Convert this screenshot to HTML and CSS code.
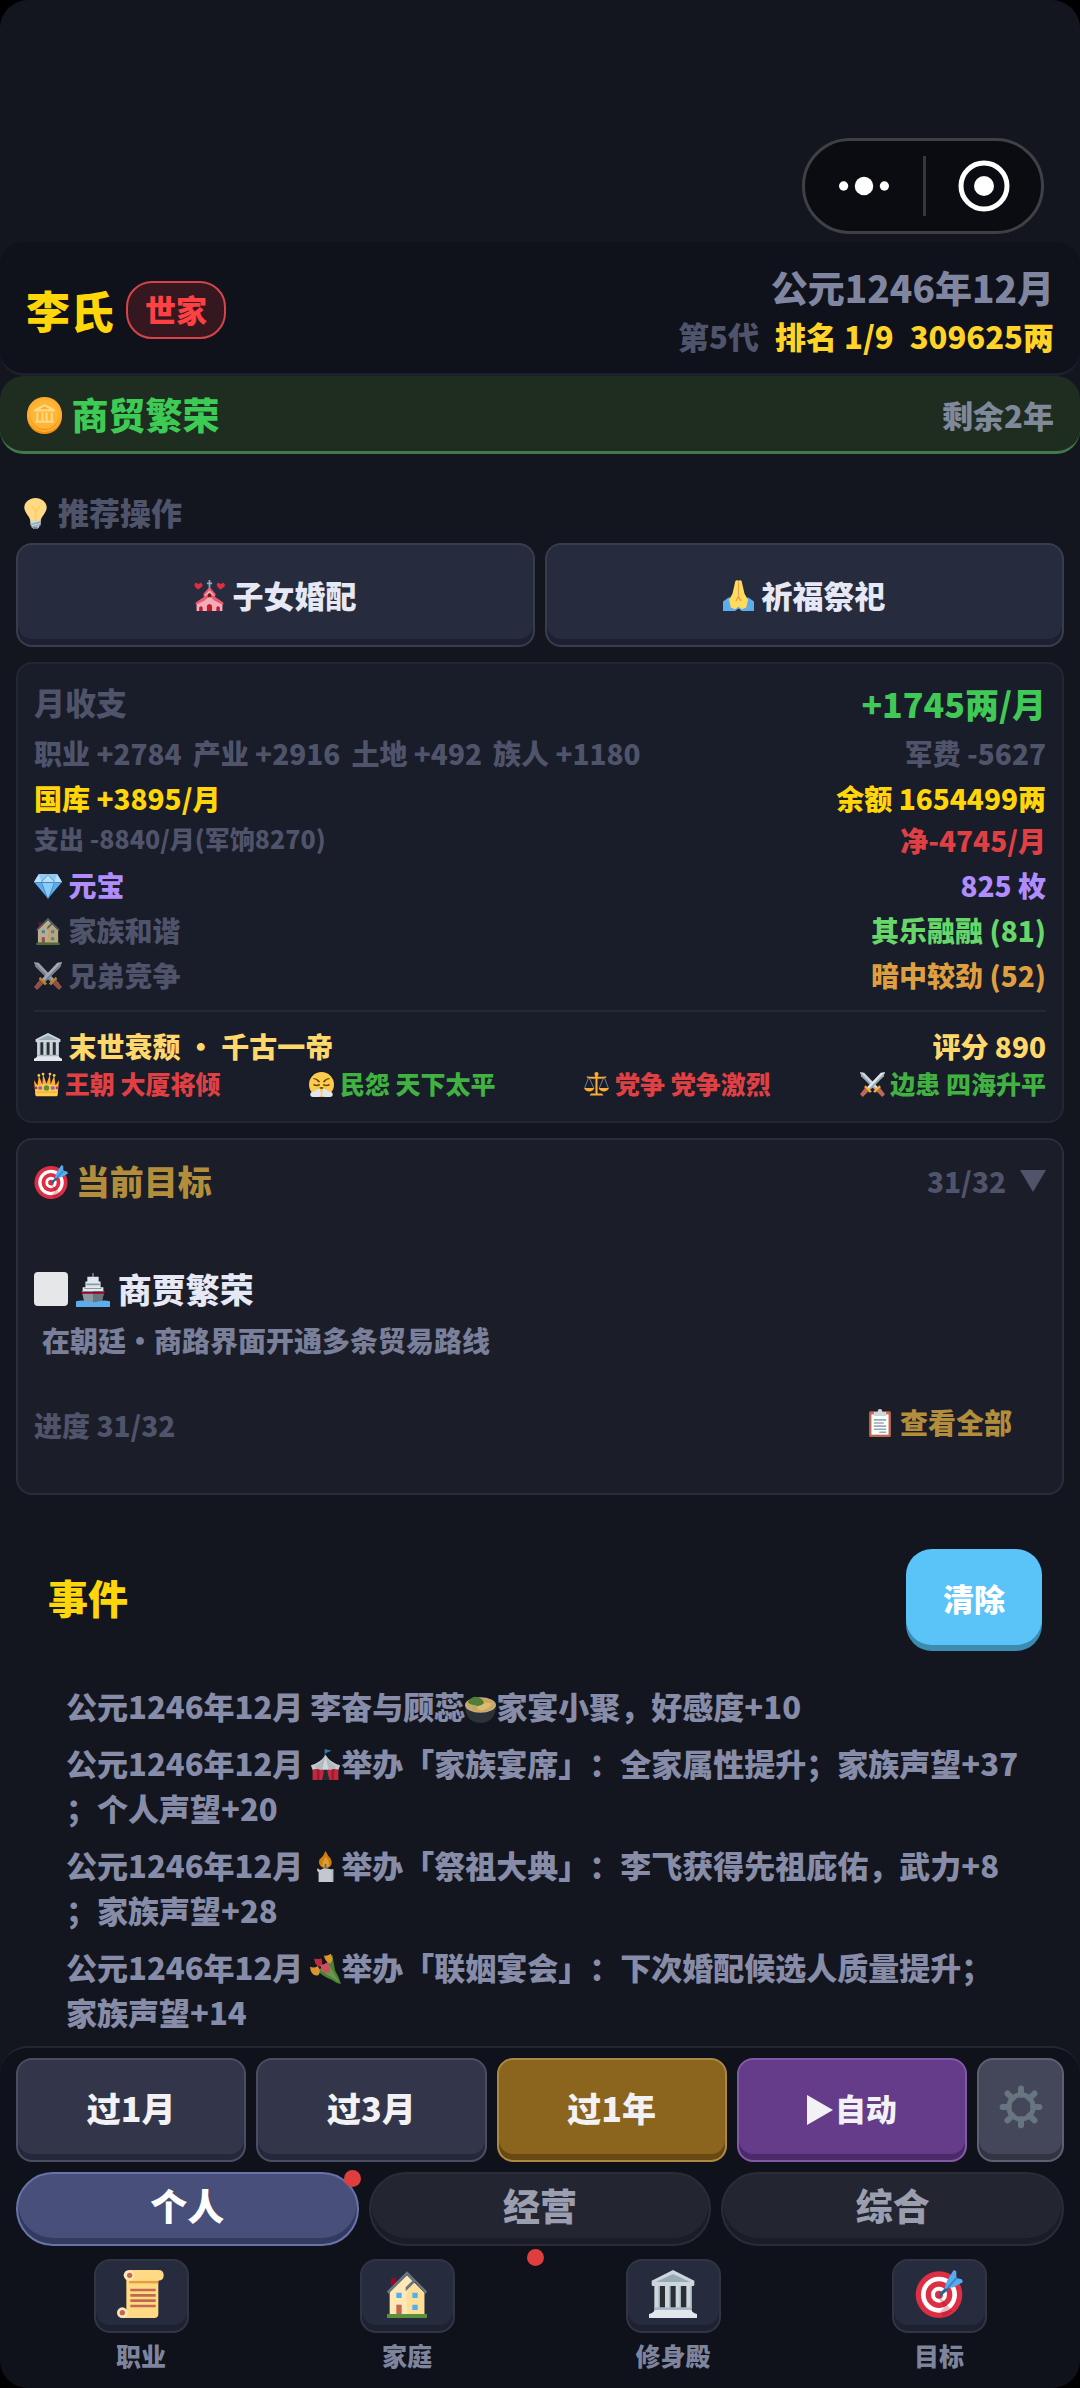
FILE: index.html
```html
<!DOCTYPE html>
<html lang="zh-CN">

<head>
    <meta charset="UTF-8">
    <meta name="viewport" content="width=device-width, initial-scale=1.0">
    <title>李氏</title>
    <link rel="stylesheet" href="styles.css">
</head>

<body>
    <!-- 图标 -->
    <svg class="sprite" aria-hidden="true">
        <symbol id="i-coin" viewBox="0 0 36 36">
            <circle cx="18" cy="19" r="17" fill="#f4900c" />
            <circle cx="18" cy="17" r="17" fill="#ffac33" />
            <circle cx="18" cy="18" r="14" fill="#f4900c" />
            <circle cx="18" cy="17" r="14" fill="#ffb636" />
            <g fill="#ffd983">
                <path d="M8 14v-2l10-5 10 5v2z" />
                <path d="M10 15h2v8h-2zM15 15h2v8h-2zM19 15h2v8h-2zM24 15h2v8h-2zM9 23h18v2H9z" />
            </g>
            <path d="M13 12l5-3 5 3z" fill="#ffac33" />
        </symbol>
        <symbol id="i-bulb" viewBox="0 0 36 36">
            <path d="M31 11.060C31 4.950 25 0 18 0S5 4.950 5 11.060c0 6 7 10.940 7 15.940h12c0-5 7-9.940 7-15.940z" fill="#ffd983" />
            <path d="M13 10c1 3 4 2 4.500 6V27h1.500V16c.5-4 3.500-3 4.500-6l-1-.8c-1 2.800-3 2.300-4.200 4.300-1.200-2-3.200-1.500-4.200-4.300z" fill="#ffcc4d" />
            <path d="M12 26h12v4l-2 4-2 2h-4l-2-2-2-4z" fill="#ccd6dd" />
            <path d="M12 30l12-3v2l-12 3zM13 33l11-3v2l-10 3z" fill="#99aab5" />
            <path d="M15 34h6l-1.500 2h-3z" fill="#66757f" />
        </symbol>
        <symbol id="i-chapel" viewBox="0 0 36 36">
            <path d="M17 0h2v3h2v2h-2v6h-2V5h-2V3h2z" fill="#99aab5" />
            <path d="M12 16l6-7 6 7v5l9 6v9H3v-9l9-6z" fill="#f4abba" />
            <path d="M18 8l-7 8v3l7-7 7 7v-3zM11 20L2 26v3l10-5 6-5 6 5 10 5v-3l-9-6-7-5z" fill="#ea596e" />
            <path d="M6 36v-4q2-3 4 0v4zM26 36v-4q2-3 4 0v4zM15 36v-6q3-4 6 0v6z" fill="#be1931" />
            <path d="M16 20v-3q2-3 4 0v3z" fill="#662113" />
            <path d="M5 11C0 8 0 5 1 4q2-2 4 1 3-3 4-1c2 2 1 4-4 7zM31 11c-5-3-5-6-4-7q2-2 4 1 3-3 4-1c2 2 1 4-4 7z" fill="#dd2e44" />
        </symbol>
        <symbol id="i-pray" viewBox="0 0 36 36">
            <path d="M0 25l7-5 5 4 6 5 6-5 5-4 7 5v11H22l-4-3-4 3H0z" fill="#5dadec" />
            <path d="M18 1c-1-1-4-1-4 2l-3 13-4 7 2 9 5 2 4-3 4 3 5-2 2-9-4-7-3-13c0-3-3-3-4-2z" fill="#ffdc5d" />
            <path d="M17.500 2h1v17l3 5-1 1-2.500-4-2.500 4-1-1 3-5z" fill="#ef9645" />
        </symbol>
        <symbol id="i-gem" viewBox="0 0 36 36">
            <path d="M6 3h24l6 10-18 21L0 13z" fill="#5dadec" />
            <path d="M6 3h24l6 10H0z" fill="#bdddf4" />
            <path d="M6 3l4 10L18 3l8 10 4-10zM10 13l8 21 8-21z" fill="#8ccaf7" />
            <path d="M0 13h36l-1 1H1zM10 13l8 21h-1L9 13zM26 13l-8 21h1l8-21zM18 3l-9 10h1l8-9 8 9h1z" fill="#4289c1" />
        </symbol>
        <symbol id="i-house" viewBox="0 0 36 36">
            <path d="M6 6h4v9H6z" fill="#a0041e" />
            <path d="M5 16L18 4l13 13v16H5z" fill="#ffe8b6" />
            <path d="M18 15l6-5 7 7v16H18z" fill="#ffd983" opacity=".6" />
            <path d="M18 1L3 16l1 2L18 4l4 4-5 5v3l7-7 8 9 1-2z" fill="#66757f" />
            <path d="M10 17h4v4h-4zM22 17h4v4h-4zM22 26h4v4h-4z" fill="#55acee" />
            <path d="M10 26h4v8h-4z" fill="#c1694f" />
            <path d="M3 33h30v3H3z" fill="#5c913b" />
        </symbol>
        <symbol id="i-swords" viewBox="0 0 36 36">
            <path d="M0 0l6 1 21 22-4 4L2 6z" fill="#ccd6dd" />
            <path d="M1 1l24 25-2 1L2 6z" fill="#99aab5" />
            <path d="M27 25l2-2 7 9-4 4-8-8z" fill="#bf6952" />
            <path d="M19 28l9-9 2 3-8 8z" fill="#ffac33" />
            <path d="M36 0l-6 1L9 23l4 4L34 6z" fill="#e1e8ed" />
            <path d="M35 1L11 26l2 1L34 6z" fill="#99aab5" />
            <path d="M9 25l-2-2-7 9 4 4 8-8z" fill="#bf6952" />
            <path d="M17 28l-9-9-2 3 8 8z" fill="#ffac33" />
        </symbol>
        <symbol id="i-temple" viewBox="0 0 36 36">
            <path d="M4 11h28v18H4z" fill="#292f33" />
            <path d="M4 11h4v18H4zM12 11h4v18h-4zM20 11h4v18h-4zM28 11h4v18h-4z" fill="#ccd6dd" />
            <path d="M7 11h1v18H7zM15 11h1v18h-1zM23 11h1v18h-1zM31 11h1v18h-1z" fill="#aab8c2" />
            <path d="M18 0l16 8v3q0 1-1 1H3q-1 0-1-1V8z" fill="#ccd6dd" />
            <path d="M18 3l13 6H5z" fill="#99aab5" />
            <path d="M4 28h28v3H4z" fill="#aab8c2" />
            <path d="M4 30h28q0 2 4 3v3H0v-3q4-1 4-3z" fill="#e1e8ed" />
        </symbol>
        <symbol id="i-crown" viewBox="0 0 36 36">
            <path d="M2 32L0 12l5 7L7 5l5 13L13 3l5 14L23 3l1 15 5-13 2 14 5-7-2 20z" fill="#ffac33" />
            <path d="M2 20q16-5 32 0v13q0 2-2 2H4q-2 0-2-2z" fill="#ffcc4d" />
            <path d="M3 28h30v2H3z" fill="#ffac33" />
            <circle cx="18" cy="23" r="4" fill="#5c913b" />
            <circle cx="9" cy="23" r="3" fill="#9266cc" />
            <circle cx="27" cy="23" r="3" fill="#9266cc" />
            <circle cx="3" cy="23" r="2" fill="#dd2e44" />
            <circle cx="33" cy="23" r="2" fill="#dd2e44" />
            <g fill="#ffcc4d">
                <circle cx="7" cy="5" r="2" />
                <circle cx="13" cy="3" r="2" />
                <circle cx="23" cy="3" r="2" />
                <circle cx="29" cy="5" r="2" />
            </g>
        </symbol>
        <symbol id="i-huff" viewBox="0 0 36 36">
            <circle cx="18" cy="18" r="18" fill="#ffcc4d" />
            <path d="M6 9q6-1 10 5l-2 1q-4-5-8-5zM30 9q-6-1-10 5l2 1q4-5 8-5zM7 17q4 3 8 0l1 2q-5 3-10 0zM29 17q-4 3-8 0l-1 2q5 3 10 0z" fill="#664500" />
            <path d="M12 24q6-5 12 0z" fill="#664500" />
            <path d="M15 22l2 8q1 6-4 6H6q-5 0-4-5 1-3 5-3 4-1 8-6zM21 22l-2 8q-1 6 4 6h7q5 0 4-5-1-3-5-3-4-1-8-6z" fill="#e1e8ed" />
        </symbol>
        <symbol id="i-scales" viewBox="0 0 36 36">
            <path d="M16.500 3h3v28h-3zM10 31h16l2 3H8z" fill="#ffac33" />
            <circle cx="18" cy="3" r="3" fill="#ffac33" />
            <path d="M4 6q7 2 14 0 7 2 14 0v2q-7 3-14 1-7 2-14-1z" fill="#ffac33" />
            <path d="M7 7L1 23M7 7l7 16M29 7l-7 16M29 7l6 16" stroke="#99aab5" stroke-width="1" />
            <path d="M0 23h15q-2 5-7.500 5T0 23zM21 23h15q-2 5-7.500 5T21 23z" fill="#ffac33" />
        </symbol>
        <symbol id="i-target" viewBox="0 0 36 36">
            <circle cx="18" cy="18.500" r="17.500" fill="#dd2e44" />
            <circle cx="18" cy="18.500" r="13.500" fill="#fff" />
            <circle cx="18" cy="18.500" r="10" fill="#dd2e44" />
            <circle cx="18" cy="18.500" r="6" fill="#fff" />
            <circle cx="18" cy="18.500" r="3" fill="#dd2e44" />
            <path d="M18 19l10 12q-3 3-7 4l-2-4 3-3-5-8z" fill="#a0041e" opacity=".25" />
            <path d="M18 18l10-10 2 2-11 10z" fill="#226699" />
            <path d="M24 8l5-8 2 1v5l4 1 1 2-7 4-7 1z" fill="#55acee" />
            <path d="M24 13l7-8 1 1-7 8z" fill="#3a87c2" />
        </symbol>
        <symbol id="i-ship" viewBox="0 0 36 36">
            <path d="M17 0h2v6h-2z" fill="#66757f" />
            <path d="M12 4h12v5h2v6h3v5H7v-5h3V9h2z" fill="#e1e8ed" />
            <path d="M11 11h14v2H11zM9 16h18v1H9z" fill="#8899a6" />
            <path d="M6 19h24l-3 13H9z" fill="#8899a6" />
            <path d="M18 19h12l-3 13h-9z" fill="#66757f" />
            <path d="M6 20h24v2H6z" fill="#a0041e" />
            <path d="M0 30q6-2 12 0t12 0 12 0v6H0z" fill="#5dadec" />
        </symbol>
        <symbol id="i-clipboard" viewBox="0 0 36 36">
            <rect x="4" y="3" width="28" height="33" rx="2" fill="#c1694f" />
            <path d="M7 7h22v26H7z" fill="#fff" />
            <path d="M10 7V4h5q0-4 3-4t3 4h5v5H10z" fill="#ccd6dd" />
            <path d="M10 13h16v2H10zM10 17h13v2H10zM10 21h16v2H10zM10 25h16v2H10zM17 29h9v2h-9z" fill="#99aab5" />
        </symbol>
        <symbol id="i-bowl" viewBox="0 0 36 36">
            <path d="M0 15h36q0 14-9 19-9 4-18 0Q0 29 0 15z" fill="#31373d" />
            <ellipse cx="18" cy="15" rx="18" ry="9" fill="#d8c9a0" />
            <ellipse cx="18" cy="15" rx="16" ry="8" fill="#f2c069" />
            <path d="M14 18q5-7 17-5-2 6-10 8-5 1-7-3z" fill="#ffd983" />
            <path d="M3 12q5-8 12-6 6 2 7 7-5 5-11 2-4 1-8-3z" fill="#5c913b" />
            <path d="M7 17q3-2 6 1-3 3-6-1z" fill="#a6d388" />
        </symbol>
        <symbol id="i-tent" viewBox="0 0 36 36">
            <path d="M17 0l8 2-7 3v4h-1z" fill="#3b88c3" />
            <path d="M3 21h30v15H3z" fill="#dd2e44" />
            <path d="M8 22h3v14H8zM25 22h3v14h-3z" fill="#be1931" />
            <path d="M14 36q2-6 2-14h4q0 8 3 14z" fill="#292f33" />
            <path d="M18 7q6 9 17 12l-2 5-5-1-5 1-5-1-5 1-5-1-5 1-2-5Q12 16 18 7z" fill="#e1e8ed" />
            <path d="M18 7q-4 9-12 13l2 3 5 1q5-8 5-17 0 9 5 17l5-1 2-3Q22 16 18 7z" fill="#ccd6dd" />
            <path d="M18 7q-2 9-3 17h6q-1-8-3-17z" fill="#f5f8fa" />
        </symbol>
        <symbol id="i-candle" viewBox="0 0 36 36">
            <path d="M18 0q3 6 6 9 3 7-2 10-4 2-8 0-5-3-3-9 5-4 7-10z" fill="#f4900c" />
            <path d="M18 7q5 5 4 10-4 4-8 0 0-5 4-10z" fill="#ffb83f" />
            <path d="M17 15h2v7h-2z" fill="#66757f" />
            <path d="M9 20q3 3 5 1t9 0q2 1 4 0v15H10V25q-3-3-1-5z" fill="#e1e8ed" />
            <path d="M25 21h2v15h-2z" fill="#ccd6dd" />
        </symbol>
        <symbol id="i-flowers" viewBox="0 0 36 36">
            <path d="M8 20q12-5 18-18 2 12 3 18 5 8 7 16-6-1-11-5-9-3-17-11z" fill="#5c913b" />
            <path d="M12 20l22 14L21 12z" fill="#77b255" />
            <path d="M5 6q4 2 8 0 3 7-1 10-7-1-7-10z" fill="#dd2e44" />
            <path d="M16 3q4 1 8-2 4 6 0 11-5 1-8-9z" fill="#ffac33" />
            <path d="M0 16q5 2 9-1 5 7 0 11-8 1-9-10z" fill="#ffac33" />
            <path d="M12 13q5 1 7-2 7 6 3 12-9 1-10-10z" fill="#ea596e" />
        </symbol>
        <symbol id="i-scroll" viewBox="0 0 36 36">
            <path d="M7 3h24v30q0 3-3 3H4l3-5z" fill="#ffd983" />
            <path d="M9 8h22v2H9z" fill="#e39f3d" />
            <path d="M9 0h22q4 0 4 4t-4 4H9z" fill="#ffd983" />
            <circle cx="9" cy="4" r="4" fill="#ffe8b6" />
            <circle cx="9.500" cy="4" r="2" fill="#c1694f" />
            <circle cx="4" cy="32" r="4" fill="#ffe8b6" />
            <circle cx="4" cy="32" r="2" fill="#c1694f" />
            <path d="M10 14h19v2H10zM10 18h19v2H10zM10 22h19v2H10zM10 26h19v2H10z" fill="#c1694f" />
        </symbol>
        <symbol id="i-gear" viewBox="0 0 36 36">
            <g stroke="#66757f" stroke-width="5" stroke-linecap="round">
                <path d="M18 3v5M18 28v5M3 18h5M28 18h5M7 7l4 4M25 25l4 4M29 7l-4 4M11 25l-4 4" />
            </g>
            <circle cx="18" cy="18" r="10" fill="none" stroke="#66757f" stroke-width="4" />
        </symbol>
    </svg>

    <div class="app">
        <div class="topbar">
            <div class="capsule">
                <button type="button" aria-label="更多">
                    <svg width="50" height="50" viewBox="0 0 54 54" fill="#fff">
                        <circle cx="5" cy="27" r="5" />
                        <circle cx="27" cy="27" r="10" />
                        <circle cx="49" cy="27" r="5" />
                    </svg>
                </button>
                <button type="button" aria-label="关闭">
                    <svg width="54" height="54" viewBox="0 0 54 54">
                        <circle cx="27" cy="27" r="23" fill="none" stroke="#fff" stroke-width="5" />
                        <circle cx="27" cy="27" r="10" fill="#fff" />
                    </svg>
                </button>
            </div>
        </div>

        <header class="header">
            <div class="family">
                <h1>李氏</h1>
                <span class="badge">世家</span>
            </div>
            <div class="status">
                <div class="date">公元1246年12月</div>
                <div class="rank"><span>第5代</span><b>排名 1/9</b><b>309625两</b></div>
            </div>
        </header>

        <div class="era">
            <span class="era-name"><svg class="icon"><use href="#i-coin" /></svg> 商贸繁荣</span>
            <span class="era-left">剩余2年</span>
        </div>

        <main class="main">
            <h2 class="tip"><svg class="icon"><use href="#i-bulb" /></svg> 推荐操作</h2>
            <div class="actions">
                <button type="button" class="btn"><svg class="icon"><use href="#i-chapel" /></svg> 子女婚配</button>
                <button type="button" class="btn"><svg class="icon"><use href="#i-pray" /></svg> 祈福祭祀</button>
            </div>

            <section class="card">
                <div class="row income"><span>月收支</span><span class="total">+1745两/月</span></div>
                <div class="row">
                    <span class="parts"><span>职业 +2784</span><span>产业 +2916</span><span>土地 +492</span><span>族人 +1180</span></span>
                    <span>军费 -5627</span>
                </div>
                <div class="row gold"><span>国库 +3895/月</span><span>余额 1654499两</span></div>
                <div class="row expense"><span class="small">支出 -8840/月(军饷8270)</span><span class="red">净-4745/月</span></div>
                <div class="row purple"><span><svg class="icon"><use href="#i-gem" /></svg> 元宝</span><span>825 枚</span></div>
                <div class="row"><span><svg class="icon dim"><use href="#i-house" /></svg> 家族和谐</span><span class="lime">其乐融融 (81)</span></div>
                <div class="row"><span><svg class="icon dim"><use href="#i-swords" /></svg> 兄弟竞争</span><span class="orange">暗中较劲 (52)</span></div>
                <div class="dynasty">
                    <div class="row"><span><svg class="icon"><use href="#i-temple" /></svg> 末世衰颓 ・ 千古一帝</span><span>评分 890</span></div>
                    <div class="factors">
                        <span class="red"><svg class="icon"><use href="#i-crown" /></svg> 王朝 大厦将倾</span>
                        <span class="green"><svg class="icon"><use href="#i-huff" /></svg> 民怨 天下太平</span>
                        <span class="red"><svg class="icon"><use href="#i-scales" /></svg> 党争 党争激烈</span>
                        <span class="green"><svg class="icon"><use href="#i-swords" /></svg> 边患 四海升平</span>
                    </div>
                </div>
            </section>

            <section class="card goals">
                <div class="goals-head">
                    <h2><svg class="icon"><use href="#i-target" /></svg> 当前目标</h2>
                    <span class="count">31/32 <svg class="caret" viewBox="0 0 26 22"><path d="M0 0h26L13 22z" fill="currentColor" /></svg></span>
                </div>
                <div class="goal">
                    <input type="checkbox" id="goal">
                    <label for="goal"><svg class="icon"><use href="#i-ship" /></svg> 商贾繁荣</label>
                </div>
                <p class="goal-desc">在朝廷・商路界面开通多条贸易路线</p>
                <div class="goals-foot">
                    <span>进度 31/32</span>
                    <button type="button"><svg class="icon"><use href="#i-clipboard" /></svg> 查看全部</button>
                </div>
            </section>

            <section class="events">
                <div class="events-head">
                    <h2>事件</h2>
                    <button type="button">清除</button>
                </div>
                <ul>
                    <li>公元1246年12月 李奋与顾蕊<svg class="icon"><use href="#i-bowl" /></svg>家宴小聚，好感度+10</li>
                    <li>公元1246年12月 <svg class="icon"><use href="#i-tent" /></svg>举办「家族宴席」：全家属性提升；家族声望+37；个人声望+20</li>
                    <li>公元1246年12月 <svg class="icon"><use href="#i-candle" /></svg>举办「祭祖大典」：李飞获得先祖庇佑，武力+8；家族声望+28</li>
                    <li>公元1246年12月 <svg class="icon"><use href="#i-flowers" /></svg>举办「联姻宴会」：下次婚配候选人质量提升；家族声望+14</li>
                </ul>
            </section>
        </main>

        <footer class="footer">
            <div class="steps">
                <button type="button">过1月</button>
                <button type="button">过3月</button>
                <button type="button" class="year">过1年</button>
                <button type="button" class="auto"><svg class="play" viewBox="0 0 26 30"><path d="M0 0l26 15L0 30z" fill="currentColor" /></svg>自动</button>
                <button type="button" class="setting" aria-label="设置"><svg class="icon"><use href="#i-gear" /></svg></button>
            </div>
            <div class="tabs">
                <button type="button" class="on">个人<i class="dot"></i></button>
                <button type="button">经营</button>
                <button type="button">综合</button>
            </div>
            <nav class="nav">
                <a href="#"><span class="nav-icon"><svg class="icon"><use href="#i-scroll" /></svg></span>职业</a>
                <a href="#"><span class="nav-icon"><svg class="icon"><use href="#i-house" /></svg></span>家庭<i class="dot"></i></a>
                <a href="#"><span class="nav-icon"><svg class="icon"><use href="#i-temple" /></svg></span>修身殿</a>
                <a href="#"><span class="nav-icon"><svg class="icon"><use href="#i-target" /></svg></span>目标</a>
            </nav>
        </footer>
    </div>
</body>

</html>
```
FILE: styles.css
```css
* {
    margin: 0;
    padding: 0;
    box-sizing: border-box;
}

body {
    background: #000;
    color: #4f546b;
    font-family: "Noto Sans CJK SC", "Noto Sans", sans-serif;
    font-size: 28px;
    font-weight: 900;
    line-height: 41px;
}

button {
    border: none;
    background: none;
    color: inherit;
    font: inherit;
    cursor: pointer;
}

a {
    color: inherit;
    text-decoration: none;
}

h1,
h2,
b {
    font-weight: 900;
}

ul {
    list-style: none;
}

.sprite {
    position: absolute;
    width: 0;
    height: 0;
}

.icon {
    width: 1em;
    height: 1em;
    vertical-align: -0.12em;
}

.dim {
    opacity: .7;
}

.app {
    display: flex;
    flex-direction: column;
    min-height: 100vh;
    overflow: hidden;
    border-radius: 28px;
    background: #13161e;
}

/* 顶部胶囊 */
.topbar {
    display: flex;
    justify-content: flex-end;
    padding: 138px 36px 8px;
}

.capsule {
    display: flex;
    align-items: center;
    height: 96px;
    border: 3px solid #3e4045;
    border-radius: 48px;
    background: #0b0c11;
}

.capsule button {
    display: flex;
    align-items: center;
    justify-content: center;
    width: 118px;
    height: 60px;
}

.capsule button + button {
    border-left: 3px solid #35373b;
}

/* 家族信息 */
.header {
    display: flex;
    align-items: center;
    justify-content: space-between;
    height: 134px;
    padding: 4px 26px 0;
    border-bottom: 3px solid #1e212d;
    border-radius: 24px;
    background: #0f111b;
}

.family {
    display: flex;
    align-items: center;
    gap: 12px;
}

.family h1 {
    color: #ffd60a;
    font-size: 44px;
    line-height: 60px;
}

.badge {
    padding: 5px 17px 7px;
    border: 2px solid #d8434a;
    border-radius: 26px;
    background: #35181f;
    color: #ff4144;
    font-size: 31px;
    line-height: 42px;
}

.status {
    text-align: right;
}

.date {
    color: #8186a0;
    font-size: 37px;
    line-height: 52px;
}

.rank {
    display: flex;
    justify-content: flex-end;
    gap: 16px;
    font-size: 31px;
    line-height: 45px;
}

.rank b {
    color: #ffd426;
}

.era {
    display: flex;
    align-items: center;
    justify-content: space-between;
    height: 78px;
    padding: 2px 26px 0;
    border-bottom: 3px solid #407a49;
    border-radius: 24px;
    background: #1f2d20;
}

.era-name {
    color: #3ecb55;
    font-size: 37px;
}

.era-left {
    color: #7f8999;
    font-size: 31px;
}

.main {
    flex: 1;
    padding: 35px 16px 4px;
}

.tip {
    margin-bottom: 9px;
    padding-left: 4px;
    font-size: 31px;
    line-height: 45px;
}

.actions {
    display: flex;
    gap: 10px;
}

.btn {
    flex: 1;
    height: 104px;
    padding-bottom: 2px;
    border: 2px solid #383c4c;
    border-radius: 16px;
    background: #272b3e;
    box-shadow: inset 0 -6px #1d2032;
    color: #e6e8f5;
    font-size: 31px;
}

/* 卡片 */
.card {
    margin-top: 15px;
    padding: 15px 16px 22px;
    border: 2px solid #232733;
    border-radius: 16px;
    background: #191c29;
}

.row {
    display: flex;
    justify-content: space-between;
    margin-bottom: 4px;
}

.income {
    font-size: 31px;
    line-height: 45px;
}

.total {
    color: #40c957;
    font-size: 34px;
    line-height: 50px;
}

.parts {
    display: flex;
    gap: 11px;
}

.gold {
    margin-bottom: 1px;
    color: #ffd60a;
}

.small {
    font-size: 25px;
    line-height: 36px;
}

.red {
    color: #df4043;
}

.green {
    color: #41b241;
}

.purple {
    color: #b08cff;
}

.lime {
    color: #67d769;
}

.orange {
    color: #dd9f3f;
}

.dynasty {
    margin-top: 14px;
    padding-top: 14px;
    border-top: 2px solid #252936;
    color: #ffd86b;
}

.dynasty .row {
    margin-bottom: 0;
}

.factors {
    display: flex;
    justify-content: space-between;
    font-size: 25px;
    line-height: 32px;
}

/* 当前目标 */
.goals {
    padding: 16px;
    border-color: #292e3c;
    background: #1b1e28;
}

.goals-head {
    display: flex;
    align-items: center;
    justify-content: space-between;
    margin-bottom: 58px;
}

.goals-head h2 {
    color: #b28d3c;
    font-size: 34px;
    line-height: 50px;
}

.count {
    display: flex;
    align-items: center;
    gap: 14px;
}

.caret {
    width: 26px;
    height: 22px;
}

.goal {
    display: flex;
    align-items: center;
    gap: 8px;
    color: #e6e8f5;
    font-size: 34px;
    line-height: 50px;
}

.goal input {
    width: 34px;
    height: 34px;
    border-radius: 4px;
    background: #e6e7e8;
    appearance: none;
}

.goal-desc {
    margin: 6px 8px 12px;
    color: #7a7f9a;
}

.goals-foot {
    display: flex;
    align-items: center;
    justify-content: space-between;
}

.goals-foot button {
    height: 104px;
    padding: 0 34px 6px;
    color: #b28d3c;
}

/* 事件 */
.events {
    margin-top: 38px;
    padding: 16px 22px 0 32px;
}

.events-head {
    display: flex;
    align-items: center;
    justify-content: space-between;
    margin-bottom: 22px;
}

.events-head h2 {
    color: #ffd60a;
    font-size: 40px;
    line-height: 58px;
}

.events-head button {
    padding: 30px 37px 28px;
    border-radius: 26px;
    background: #5ac3f8;
    box-shadow: 0 6px #3c8cb2;
    color: #fff;
    font-size: 31px;
    line-height: 38px;
}

.events ul {
    padding: 16px 22px 0 18px;
    color: #878ca8;
    font-size: 31px;
    line-height: 45px;
    line-break: anywhere;
    text-spacing-trim: space-all;
}

.events li + li {
    margin-top: 12px;
}

.events .icon {
    opacity: .85;
}

/* 底部 */
.footer {
    padding: 10px 16px 7px;
    border-top: 2px solid #24272f;
    border-radius: 28px 28px 0 0;
    background: #0f111b;
}

.steps {
    display: flex;
    gap: 10px;
}

.steps button {
    flex: 1;
    height: 104px;
    padding-bottom: 6px;
    border: 2px solid #4a4e63;
    border-radius: 16px;
    background: #33364b;
    box-shadow: inset 0 -6px #25283a;
    color: #f2f2f5;
    font-size: 34px;
}

.steps .year {
    border-color: #ac8940;
    background: #8b641e;
    box-shadow: inset 0 -6px #684813;
}

.steps .auto {
    border-color: #8259a6;
    background: #643c8a;
    box-shadow: inset 0 -6px #4b2a6a;
    font-size: 31px;
}

.play {
    width: 26px;
    height: 30px;
    margin-right: 2px;
    vertical-align: -4px;
}

.steps .setting {
    flex: 0 0 87px;
    border-color: #5c6072;
    background: #444659;
    box-shadow: inset 0 -6px #323444;
    font-size: 44px;
}

.tabs {
    display: flex;
    gap: 10px;
    margin-top: 10px;
}

.tabs button {
    position: relative;
    flex: 1;
    height: 74px;
    padding-bottom: 8px;
    border: 2px solid #2a2c37;
    border-radius: 38px;
    background: #232530;
    box-shadow: inset 0 -6px #1a1c27;
    color: #9a9eaf;
    font-size: 37px;
}

.tabs .on {
    border-color: #6873a8;
    background: #474f7a;
    box-shadow: inset 0 -6px #333a60;
    color: #fff;
}

.dot {
    position: absolute;
    top: -4px;
    right: -4px;
    width: 17px;
    height: 17px;
    border-radius: 50%;
    background: #df3e3e;
}

.nav {
    display: flex;
    margin: 7px -8px 0;
}

.nav a {
    position: relative;
    flex: 1;
    display: flex;
    flex-direction: column;
    align-items: center;
    gap: 4px;
    padding: 6px 0 8px;
    color: #7f849d;
    font-size: 25px;
    line-height: 36px;
}

.nav-icon {
    display: flex;
    align-items: center;
    justify-content: center;
    width: 95px;
    height: 74px;
    padding-bottom: 4px;
    border: 2px solid #303443;
    border-radius: 16px;
    background: #272b3e;
    box-shadow: inset 0 -6px #1e2131;
    font-size: 48px;
}
```
